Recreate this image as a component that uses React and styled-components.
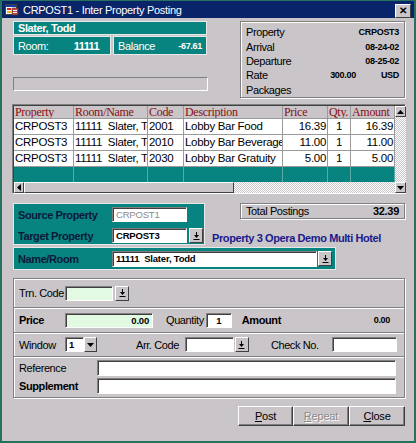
import React from 'react';
import styled, { createGlobalStyle } from 'styled-components';

const GlobalStyle = createGlobalStyle`
  body {
    margin: 0;
    background: #c9c5c9;
    font-family: "Liberation Sans", Arial, sans-serif;
    font-size: 11px;
    letter-spacing: -0.4px;
  }
`;

const gray = '#c9c5c9';
const teal = '#078480';

const Window = styled.div`
  width: 416px;
  height: 443px;
  box-sizing: border-box;
  background: ${gray};
  border: 2px solid #27725f;
  border-top: 1px solid #27725f;
  display: flex;
  flex-direction: column;
`;

const TitleBar = styled.div`
  height: 17px;
  background: #0a246a;
  display: flex;
  align-items: center;
  padding: 0 3px;
  color: #fff;
  font-size: 11px;
  letter-spacing: -0.3px;
`;

const TitleText = styled.span`
  margin-left: 4px;
  flex: 1;
`;

const CloseBtn = styled.div`
  width: 14px;
  height: 12px;
  background: ${gray};
  border: 1px solid;
  border-color: #fff #404040 #404040 #fff;
  color: #000;
  font-size: 10px;
  line-height: 12px;
  text-align: center;
  font-weight: bold;
  margin-top: 3px;
`;

const Body = styled.div`
  flex: 1;
  padding: 3px 9px 0 11px;
  display: flex;
  flex-direction: column;
`;

const TopRow = styled.div`
  display: flex;
  justify-content: space-between;
  align-items: flex-start;
`;

const GuestCol = styled.div`
  width: 194px;
  display: flex;
  flex-direction: column;
`;

const TealBox = styled.div`
  background: ${teal};
  color: #fff;
  border: 1px solid #e8e8e8;
  box-sizing: border-box;
  height: ${p => p.$h || 21}px;
  display: flex;
  align-items: center;
  padding: 0 4px;
  width: ${p => (p.$w ? `${p.$w}px` : 'auto')};
  flex: ${p => (p.$w ? 'none' : 1)};
  justify-content: space-between;
`;

const GuestName = styled.span`
  font-weight: bold;
  font-size: 11px;
`;

const InfoRow = styled.div`
  display: flex;
  gap: 2px;
  margin-top: 1px;
`;

const Bold = styled.span`
  font-weight: bold;
  font-size: ${p => p.$size || 11}px;
  letter-spacing: ${p => p.$ls ?? -0.4}px;
  margin-right: ${p => p.$mr || 0}px;
`;

const BlankBar = styled.div`
  margin-top: 22px;
  height: 14px;
  width: 195px;
  border: 1px solid;
  border-color: #808080 #fff #fff #808080;
  box-sizing: border-box;
`;

const Etched = styled.div`
  border: 1px solid #808080;
  box-shadow: inset 1px 1px #fff, 1px 1px #fff;
  box-sizing: border-box;
  flex: none;
`;

const StayBox = styled(Etched)`
  width: 165px;
  height: 77px;
  padding: 3px 5px 0 5px;
  display: flex;
  flex-direction: column;
`;

const StayLine = styled.div`
  display: flex;
  justify-content: space-between;
  align-items: center;
  height: 14.5px;
`;

const Value = styled.span`
  font-weight: bold;
  font-size: 9px;
  letter-spacing: -0.3px;
`;

const RateValues = styled.span`
  display: flex;
  gap: 25px;
`;

const GridWrap = styled.div`
  margin-top: 6px;
  margin-left: -1px;
  width: 394px;
  height: 90px;
  box-sizing: border-box;
  border: 1px solid;
  border-color: #808080 #fff #fff #808080;
  box-shadow: inset 1px 1px #404040;
  display: flex;
  padding: 1px 0 0 1px;
`;

const GridMain = styled.div`
  width: 381px;
  display: flex;
  flex-direction: column;
`;

const cols = '60px 74px 36px 99px 45px 23px 44px';

const GridRow = styled.div`
  display: grid;
  grid-template-columns: ${cols};
  height: ${p => p.$h}px;
  background: ${p => p.$bg};
`;

const HeadCell = styled.div`
  font-family: "Liberation Serif", "Times New Roman", serif;
  font-size: 12px;
  letter-spacing: -0.3px;
  color: #8a1010;
  border-right: 1px solid #9a9a9a;
  border-bottom: 1px solid #9a9a9a;
  padding-left: 1px;
  line-height: 13px;
  overflow: hidden;
  white-space: nowrap;
`;

const Cell = styled.div`
  font-size: 11.5px;
  letter-spacing: -0.3px;
  border-right: 1px solid #9a9a9a;
  border-bottom: 1px solid #9a9a9a;
  padding: 0 1px;
  line-height: 15px;
  overflow: hidden;
  white-space: pre;
  text-align: ${p => p.$align || 'left'};
`;

const TealCell = styled.div`
  border-right: 1px solid #5aa8a4;
`;

const HScroll = styled.div`
  height: 11px;
  display: flex;
  background: repeating-conic-gradient(#fff 0 25%, #c9c5c9 0 50%) 0 0 / 2px 2px;
`;

const ScrollBtn = styled.div`
  width: ${p => p.$w || 10}px;
  height: ${p => p.$h || 11}px;
  box-sizing: border-box;
  background: ${gray};
  border: 1px solid;
  border-color: #fff #404040 #404040 #fff;
  display: flex;
  align-items: center;
  justify-content: center;
  flex: none;
`;

const Thumb = styled(ScrollBtn)`
  width: 210px;
`;

const VScroll = styled.div`
  width: 11px;
  display: flex;
  flex-direction: column;
  justify-content: space-between;
  background: repeating-conic-gradient(#fff 0 25%, #c9c5c9 0 50%) 0 0 / 2px 2px;
`;

const MidRow = styled.div`
  display: flex;
  justify-content: space-between;
  align-items: flex-start;
  margin-top: 9px;
`;

const PropPanel = styled.div`
  background: ${teal};
  width: 192px;
  height: 42px;
  box-sizing: border-box;
  border: 1px solid #e8e8e8;
  padding: 3px 0 0 4px;
  display: flex;
  flex-direction: column;
  gap: 6px;
  flex: none;
`;

const PanelLine = styled.div`
  display: flex;
  align-items: center;
`;

const PanelLabel = styled.span`
  width: ${p => p.$w || 94}px;
  font-weight: bold;
  font-size: 11px;
  color: #0c1838;
  flex: none;
`;

const Field = styled.div`
  width: ${p => p.$w}px;
  height: ${p => p.$h || 15}px;
  box-sizing: border-box;
  background: ${p => p.$bg || '#fff'};
  border: 1px solid;
  border-color: #808080 #fff #fff #808080;
  box-shadow: inset 1px 1px #404040;
  display: flex;
  align-items: center;
  justify-content: ${p => p.$justify || 'flex-start'};
  padding: 0 3px;
  font-size: ${p => p.$size || 9.5}px;
  font-weight: ${p => (p.$bold ? 'bold' : 'normal')};
  letter-spacing: -0.2px;
  color: ${p => p.$color || '#000'};
  white-space: pre;
  flex: none;
`;

const DropBtn = styled.div`
  width: ${p => p.$w || 14}px;
  height: 15px;
  box-sizing: border-box;
  background: ${gray};
  border: 1px solid;
  border-color: #fff #404040 #404040 #fff;
  display: flex;
  align-items: center;
  justify-content: center;
  margin-left: ${p => p.$ml ?? 2}px;
  flex: none;
`;

const RightCol = styled.div`
  display: flex;
  flex-direction: column;
  width: 165px;
  flex: none;
`;

const TotalBox = styled(Etched)`
  width: 165px;
  height: 16px;
  display: flex;
  align-items: center;
  justify-content: space-between;
  padding: 0 5px;
`;

const HotelName = styled.div`
  margin-top: 13px;
  margin-left: -28px;
  color: #1a1a8c;
  font-weight: bold;
  font-size: 11px;
  white-space: nowrap;
`;

const NamePanel = styled(PropPanel)`
  width: 323px;
  height: 23px;
  margin-top: 2px;
  padding: 0 0 0 4px;
  flex-direction: row;
  align-items: center;
  gap: 0;
`;

const GroupBox = styled(Etched)`
  margin-top: 8px;
  width: 392px;
  height: 120px;
  display: flex;
  flex-direction: column;
`;

const Section = styled.div`
  height: ${p => p.$h}px;
  box-sizing: border-box;
  border-bottom: ${p => (p.$last ? 'none' : '1px solid #808080')};
  box-shadow: ${p => (p.$last ? 'none' : '0 1px #fff')};
  display: flex;
  flex-direction: ${p => (p.$col ? 'column' : 'row')};
  align-items: ${p => (p.$col ? 'stretch' : 'center')};
  justify-content: ${p => (p.$col ? 'center' : 'flex-start')};
  gap: ${p => p.$gap || 0}px;
  padding-left: 5px;
  flex: none;
`;

const Label = styled.span`
  width: ${p => (p.$w ? `${p.$w}px` : 'auto')};
  font-weight: ${p => (p.$bold ? 'bold' : 'normal')};
  margin-left: ${p => p.$ml || 0}px;
  margin-right: ${p => p.$mr || 0}px;
  white-space: nowrap;
  flex: none;
`;

const AmountValue = styled.span`
  margin-left: auto;
  margin-right: 14px;
  font-weight: bold;
  font-size: 9px;
  letter-spacing: -0.3px;
`;

const RefLine = styled.div`
  display: flex;
  align-items: center;
`;

const Footer = styled.div`
  display: flex;
  justify-content: flex-end;
  margin-top: 8px;
`;

const Button = styled.button`
  width: ${p => p.$w || 55}px;
  height: 20px;
  background: ${gray};
  border: 1px solid;
  border-color: #fff #404040 #404040 #fff;
  box-shadow: inset -1px -1px #808080;
  font-family: "Liberation Sans", Arial, sans-serif;
  font-size: 11px;
  letter-spacing: -0.2px;
  color: ${p => (p.disabled ? '#8a8a8a' : '#000')};
  text-shadow: ${p => (p.disabled ? '1px 1px #fff' : 'none')};
  padding: 0;
`;

const DownArrowLine = () => (
  <svg width="7" height="8" viewBox="0 0 7 8">
    <path d="M3 0h1v3h2L3.5 6 1 3h2z" fill="#000" />
    <rect x="0.5" y="7" width="6" height="1" fill="#000" />
  </svg>
);

const Tri = ({ dir = 'down' }) => {
  const d = {
    down: 'M0 0h7L3.5 4z',
    up: 'M0 4h7L3.5 0z',
    left: 'M4 0v7L0 3.5z',
  }[dir];
  const w = dir === 'left' ? 4 : 7;
  const h = dir === 'left' ? 7 : 4;
  return (
    <svg width={w} height={h} viewBox={`0 0 ${w} ${h}`}>
      <path d={d} fill="#000" />
    </svg>
  );
};

const AppIcon = () => (
  <svg width="14" height="13" viewBox="0 0 14 13">
    <rect x="0.5" y="1.5" width="11" height="10" fill="#fff" stroke="#404040" strokeWidth="1" />
    <rect x="1" y="2" width="10" height="2" fill="#1a3aa0" />
    <rect x="2" y="5" width="4" height="2" fill="#d02020" />
    <rect x="2" y="8" width="4" height="2" fill="#e0b020" />
    <rect x="7" y="5" width="6" height="7" fill="#c04040" stroke="#404040" strokeWidth="0.6" />
    <rect x="8" y="7" width="4" height="1" fill="#fff" />
    <rect x="8" y="9" width="4" height="1" fill="#fff" />
  </svg>
);

const postings = [
  { prop: 'CRPOST3', room: '11111  Slater, Todd', code: '2001', desc: 'Lobby Bar Food', price: '16.39', qty: '1', amt: '16.39' },
  { prop: 'CRPOST3', room: '11111  Slater, Todd', code: '2010', desc: 'Lobby Bar Beverage', price: '11.00', qty: '1', amt: '11.00' },
  { prop: 'CRPOST3', room: '11111  Slater, Todd', code: '2030', desc: 'Lobby Bar Gratuity', price: '5.00', qty: '1', amt: '5.00' },
];

const headers = ['Property', 'Room/Name', 'Code', 'Description', 'Price', 'Qty.', 'Amount'];

export default function App() {
  return (
    <>
      <GlobalStyle />
      <Window>
        <TitleBar>
          <AppIcon />
          <TitleText>CRPOST1 - Inter Property Posting</TitleText>
          <CloseBtn>✕</CloseBtn>
        </TitleBar>
        <Body>
          <TopRow>
            <GuestCol>
              <TealBox $h={21}>
                <GuestName>Slater, Todd</GuestName>
              </TealBox>
              <InfoRow>
                <TealBox $h={19} $w={98}>
                  <span>Room:</span>
                  <Bold $size={11} $ls={-0.6} $mr={7}>11111</Bold>
                </TealBox>
                <TealBox $h={19}>
                  <span>Balance</span>
                  <Bold $size={9} $ls={-0.3}>-67.61</Bold>
                </TealBox>
              </InfoRow>
              <BlankBar />
            </GuestCol>
            <StayBox>
              <StayLine><span>Property</span><Value>CRPOST3</Value></StayLine>
              <StayLine><span>Arrival</span><Value>08-24-02</Value></StayLine>
              <StayLine><span>Departure</span><Value>08-25-02</Value></StayLine>
              <StayLine>
                <span>Rate</span>
                <RateValues>
                  <Value>300.00</Value>
                  <Value>USD</Value>
                </RateValues>
              </StayLine>
              <StayLine><span>Packages</span></StayLine>
            </StayBox>
          </TopRow>

          <GridWrap>
            <GridMain>
              <GridRow $h={13} $bg={gray}>
                {headers.map(h => <HeadCell key={h}>{h}</HeadCell>)}
              </GridRow>
              {postings.map(p => (
                <GridRow key={p.code} $h={16} $bg="#fff">
                  <Cell>{p.prop}</Cell>
                  <Cell>{p.room}</Cell>
                  <Cell>{p.code}</Cell>
                  <Cell>{p.desc}</Cell>
                  <Cell $align="right">{p.price}</Cell>
                  <Cell $align="center">{p.qty}</Cell>
                  <Cell $align="right">{p.amt}</Cell>
                </GridRow>
              ))}
              <GridRow $h={15} $bg={teal}>
                {headers.map(h => <TealCell key={h} />)}
              </GridRow>
              <HScroll>
                <ScrollBtn $w={10}><Tri dir="left" /></ScrollBtn>
                <Thumb />
              </HScroll>
            </GridMain>
            <VScroll>
              <ScrollBtn $w={11} $h={11}><Tri dir="up" /></ScrollBtn>
              <ScrollBtn $w={11} $h={11}><Tri dir="down" /></ScrollBtn>
            </VScroll>
          </GridWrap>

          <MidRow>
            <PropPanel>
              <PanelLine>
                <PanelLabel>Source Property</PanelLabel>
                <Field $w={75} $color="#8a8a8a">CRPOST1</Field>
              </PanelLine>
              <PanelLine>
                <PanelLabel>Target Property</PanelLabel>
                <Field $w={75} $bold>CRPOST3</Field>
                <DropBtn><DownArrowLine /></DropBtn>
              </PanelLine>
            </PropPanel>
            <RightCol>
              <TotalBox>
                <span>Total Postings</span>
                <Bold $size={11} $ls={-0.3}>32.39</Bold>
              </TotalBox>
              <HotelName>Property 3 Opera Demo Multi Hotel</HotelName>
            </RightCol>
          </MidRow>

          <NamePanel>
            <PanelLabel>Name/Room</PanelLabel>
            <Field $w={205} $h={16} $bold>11111  Slater, Todd</Field>
            <DropBtn $ml={1}><DownArrowLine /></DropBtn>
          </NamePanel>

          <GroupBox>
            <Section $h={29}>
              <Label $w={46}>Trn. Code</Label>
              <Field $w={48} $bg="#e2fae2" />
              <DropBtn><DownArrowLine /></DropBtn>
            </Section>
            <Section $h={25}>
              <Label $w={46} $bold>Price</Label>
              <Field $w={88} $bg="#e2fae2" $justify="flex-end" $bold>0.00</Field>
              <Label $ml={13} $mr={2}>Quantity</Label>
              <Field $w={26} $bold $justify="center">1</Field>
              <Label $ml={10} $bold>Amount</Label>
              <AmountValue>0.00</AmountValue>
            </Section>
            <Section $h={24}>
              <Label $w={46}>Window</Label>
              <Field $w={19} $bold>1</Field>
              <DropBtn $ml={0} $w={13}><Tri dir="down" /></DropBtn>
              <Label $ml={39} $mr={6}>Arr. Code</Label>
              <Field $w={49} />
              <DropBtn $ml={1}><DownArrowLine /></DropBtn>
              <Label $ml={22} $mr={13}>Check No.</Label>
              <Field $w={65} />
            </Section>
            <Section $h={40} $col $gap={2} $last>
              <RefLine>
                <Label $w={78}>Reference</Label>
                <Field $w={299} $h={16} />
              </RefLine>
              <RefLine>
                <Label $w={78} $bold>Supplement</Label>
                <Field $w={299} $h={16} />
              </RefLine>
            </Section>
          </GroupBox>

          <Footer>
            <Button $w={55}><u>P</u>ost</Button>
            <Button $w={56} disabled><u>R</u>epeat</Button>
            <Button $w={56}><u>C</u>lose</Button>
          </Footer>
        </Body>
      </Window>
    </>
  );
}
